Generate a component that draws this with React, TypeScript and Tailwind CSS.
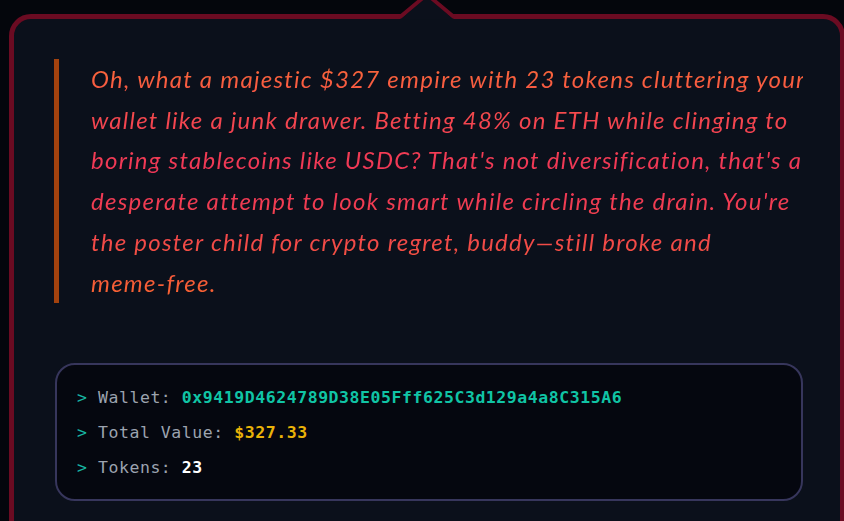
export default function App() {
  const roast = [
    "Oh, what a majestic $327 empire with 23 tokens cluttering your",
    "wallet like a junk drawer. Betting 48% on ETH while clinging to",
    "boring stablecoins like USDC? That's not diversification, that's a",
    "desperate attempt to look smart while circling the drain. You're",
    "the poster child for crypto regret, buddy\u2014still broke and",
    "meme-free.",
  ];

  return (
    <div className="h-[521px] w-full overflow-hidden bg-[#04060c]">
      <div className="relative ml-[9px] mt-[14px] w-[836px] rounded-[22px] border-[5px] border-[#6b0b22] bg-[#0b101b] pt-10 pb-10">
        {/* pointer notch on the top edge */}
        <svg
          className="absolute left-[376px] top-[-29px]"
          width="74"
          height="32"
          viewBox="0 0 74 32"
          fill="none"
        >
          <polygon points="37,6.7 9.6,29.5 64.4,29.5" fill="#0b101b" />
          <polyline
            points="10,27 37,4.5 64,27"
            stroke="#6b0b22"
            strokeWidth="3.8"
            strokeLinejoin="miter"
            fill="none"
          />
        </svg>

        <div className="ml-[40px] w-[749px]">
          <blockquote className="border-l-[5px] border-[#a3420e] pl-8">
            <p className="bg-[linear-gradient(180deg,#fb6c36_0%,#f4464f_25%,#ef3458_50%,#f24a48_75%,#f8662f_100%)] bg-clip-text text-transparent font-['Lato','Noto_Sans',sans-serif] text-[24px] italic leading-[40.7px] tracking-[1.25px]">
              {roast.map((line) => (
                <span key={line} className="block whitespace-nowrap">
                  {line}
                </span>
              ))}
            </p>
          </blockquote>

          <div className="ml-px mt-[60px] w-[748px] rounded-[20px] border-2 border-[#37365c] bg-[#05070f] px-5 pt-[15px] pb-[14px] font-['DejaVu_Sans_Mono',monospace] text-[16.5px] leading-[35px] tracking-[0.55px]">
            <div>
              <span className="text-[#17b5a2]">&gt;</span>{" "}
              <span className="text-[#9ca3af]">Wallet:</span>{" "}
              <span className="font-bold text-[#10c4a5]">
                0x9419D4624789D38E05Fff625C3d129a4a8C315A6
              </span>
            </div>
            <div>
              <span className="text-[#17b5a2]">&gt;</span>{" "}
              <span className="text-[#9ca3af]">Total Value:</span>{" "}
              <span className="font-bold text-[#eab308]">$327.33</span>
            </div>
            <div>
              <span className="text-[#17b5a2]">&gt;</span>{" "}
              <span className="text-[#9ca3af]">Tokens:</span>{" "}
              <span className="font-bold text-white">23</span>
            </div>
          </div>
        </div>
      </div>
    </div>
  );
}
